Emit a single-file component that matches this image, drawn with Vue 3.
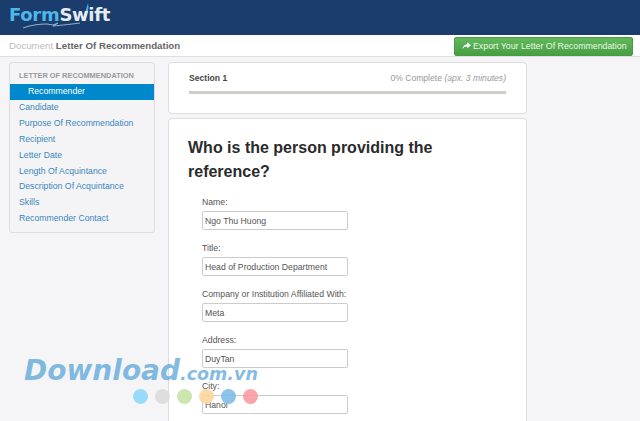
<template>
  <div class="page">
    <header class="topbar">
      <div class="logo">
        <span class="logo-form">Form</span><span class="logo-swift">Swift</span>
        <svg class="logo-pen" width="100" height="30" viewBox="0 0 100 30">
          <path d="M6 26 C14 23 22 22 30 22 L36 23 L41 21 L36 24 C46 23 56 22 63 21" fill="none" stroke="#8fb4cf" stroke-width="1" />
          <path d="M65 19 L68.500 9 L71 9 L67 19 Z" fill="#e6edf2" />
          <path d="M68.500 9 L71 1 L71.500 5 L71 9 Z" fill="#3fb4e8" />
        </svg>
      </div>
    </header>
    <div class="docbar">
      <div class="doc-title"><span class="doc-muted">Document</span> Letter Of Recommendation</div>
      <button class="export">
        <svg width="9" height="8" viewBox="0 0 12 10"><path d="M7 0 L12 4 L7 8 V5.500 C4 5.500 2 6.500 0.500 9 C1 5.500 3 3 7 2.500 Z" fill="#fff" /></svg>
        Export Your Letter Of Recommendation
      </button>
    </div>
    <div class="content">
      <aside class="sidebar">
        <div class="side-head">LETTER OF RECOMMENDATION</div>
        <div class="side-active">Recommender</div>
        <a v-for="item in navItems" :key="item" class="side-link">{{ item }}</a>
      </aside>
      <main class="main">
        <section class="card progress-card">
          <div class="progress-row">
            <span class="section-name">Section 1</span>
            <span class="progress-text">0% Complete <em>(apx. 3 minutes)</em></span>
          </div>
          <div class="progress-bar"></div>
        </section>
        <section class="card form-card">
          <h1>Who is the person providing the reference?</h1>
          <div v-for="field in fields" :key="field.label" class="field">
            <label>{{ field.label }}</label>
            <input type="text" :value="field.value" />
          </div>
        </section>
      </main>
    </div>
    <div class="watermark">
      <div class="wm-text"><span class="wm-big">Download</span><span class="wm-small">.com.vn</span></div>
      <div class="wm-dots">
        <i v-for="c in dots" :key="c" :style="{ background: c }"></i>
      </div>
    </div>
  </div>
</template>

<script setup>
const navItems = [
  'Candidate',
  'Purpose Of Recommendation',
  'Recipient',
  'Letter Date',
  'Length Of Acquintance',
  'Description Of Acquintance',
  'Skills',
  'Recommender Contact',
]

const fields = [
  { label: 'Name:', value: 'Ngo Thu Huong' },
  { label: 'Title:', value: 'Head of Production Department' },
  { label: 'Company or Institution Affiliated With:', value: 'Meta' },
  { label: 'Address:', value: 'DuyTan' },
  { label: 'City:', value: 'Hanoi' },
]

const dots = ['#8ed8f8', '#dcdcdc', '#c5e3a5', '#fbd79b', '#7fbce6', '#f99aa2']
</script>

<style>
html,
body {
  margin: 0;
  overflow: hidden;
}
</style>

<style scoped>
.page {
  position: relative;
  width: 640px;
  height: 421px;
  overflow: hidden;
  background: #f5f5f8;
  font-family: "Liberation Sans", Arial, sans-serif;
  color: #333;
}

.topbar {
  height: 35px;
  background: #1a3d6d;
  box-sizing: border-box;
  padding-left: 9px;
}

.logo {
  position: relative;
  width: 110px;
  height: 35px;
  font-family: "DejaVu Sans", sans-serif;
  font-weight: 700;
  font-size: 18px;
  line-height: 30px;
  letter-spacing: -0.3px;
  white-space: nowrap;
}

.logo-form {
  color: #4db8e8;
}

.logo-swift {
  color: #e6edf2;
}

.logo-pen {
  position: absolute;
  left: 8px;
  top: 2px;
}

.docbar {
  height: 21px;
  background: #fff;
  border-bottom: 1px solid #dfdfdf;
  display: flex;
  align-items: center;
  justify-content: space-between;
  padding: 0 7px 0 9px;
}

.doc-title {
  font-size: 9.7px;
  font-weight: 700;
  color: #666;
}

.doc-muted {
  font-weight: 400;
  color: #bbb;
}

.export {
  display: flex;
  align-items: center;
  gap: 2px;
  height: 19px;
  width: 179px;
  margin-top: 1px;
  padding: 0 0 0 7px;
  border: 1px solid #4a9a45;
  border-radius: 2px;
  background: linear-gradient(#62b95c, #479f43);
  color: #eef7e8;
  font-family: "Liberation Sans", Arial, sans-serif;
  font-size: 8.8px;
  white-space: nowrap;
}

.content {
  display: flex;
  align-items: flex-start;
  padding-top: 5px;
}

.sidebar {
  width: 146px;
  height: 171px;
  margin: 0 13px 0 9px;
  padding-top: 7px;
  box-sizing: border-box;
  background: #f4f4f6;
  border: 1px solid #ddd;
  border-radius: 3px;
  display: flex;
  flex-direction: column;
  flex-shrink: 0;
}

.side-head {
  height: 14px;
  padding-left: 9px;
  font-size: 7.4px;
  font-weight: 700;
  line-height: 11px;
  color: #999;
}

.side-active {
  height: 16px;
  padding-left: 18px;
  background: #0088cc;
  color: #fff;
  font-size: 8.7px;
  line-height: 15px;
}

.side-link {
  height: 15.9px;
  padding-left: 9px;
  color: #3a87bd;
  font-size: 8.7px;
  line-height: 14px;
  white-space: nowrap;
}

.main {
  width: 359px;
  flex-shrink: 0;
}

.card {
  background: #fff;
  border: 1px solid #ddd;
  border-radius: 4px;
  box-sizing: border-box;
}

.progress-card {
  height: 52px;
  padding: 9px 20px 0;
  margin-bottom: 4px;
}

.progress-row {
  display: flex;
  justify-content: space-between;
  font-size: 8.6px;
  line-height: 12px;
}

.section-name {
  font-weight: 700;
  color: #444;
}

.progress-text {
  color: #999;
}

.progress-bar {
  height: 3px;
  margin-top: 7px;
  background: #cfcfc9;
}

.form-card {
  height: 340px;
  padding: 17px 19px;
}

h1 {
  margin: 0 0 12px;
  width: 300px;
  font-size: 16px;
  font-weight: 700;
  line-height: 24px;
  color: #2b2b2b;
}

.field {
  margin-left: 14px;
  height: 46px;
}

label {
  display: block;
  height: 15px;
  font-size: 8.7px;
  line-height: 12px;
  color: #555;
}

input {
  display: block;
  box-sizing: border-box;
  width: 146px;
  height: 19px;
  padding: 0 2px;
  border: 1px solid #ccc;
  border-radius: 2px;
  background: #fff;
  font-family: "Liberation Sans", Arial, sans-serif;
  font-size: 8.7px;
  color: #555;
}

.watermark {
  position: absolute;
  left: 24px;
  top: 358px;
  width: 240px;
}

.wm-text {
  height: 30px;
  line-height: 26px;
  white-space: nowrap;
  font-family: "DejaVu Sans", sans-serif;
  font-weight: 700;
  font-style: italic;
  color: rgba(90, 165, 215, 0.75);
}

.wm-big {
  font-size: 28px;
}

.wm-small {
  font-size: 17.5px;
}

.wm-dots {
  display: flex;
  gap: 7px;
  margin: 0 0 0 109px;
  position: relative;
  top: 1px;
}

.wm-dots i {
  width: 15px;
  height: 15px;
  border-radius: 50%;
  opacity: 0.9;
}
</style>
